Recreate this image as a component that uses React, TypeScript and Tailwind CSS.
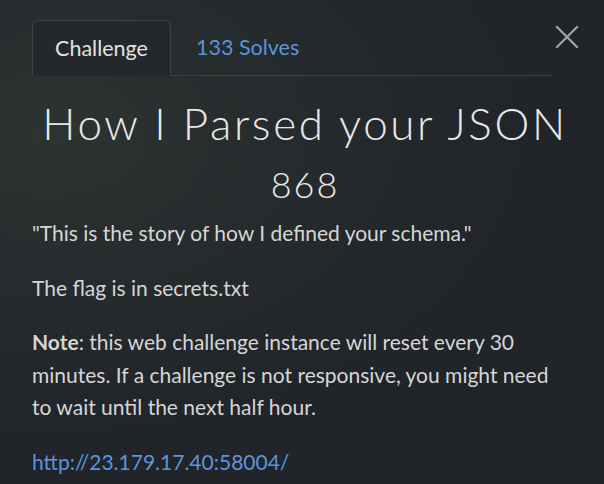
import React from "react";

export default function App() {
  return (
    <div
      className="w-[604px] h-[484px] overflow-hidden bg-[#212429] bg-[radial-gradient(ellipse_at_8%_28%,#2c3431_0%,#262b2d_30%,#212429_65%)] text-[#d9d9d9]"
      style={{ fontFamily: "Lato, 'Noto Sans', sans-serif" }}
    >
      <div className="flex items-start pl-8 pr-[22px] pt-5">
        <div className="flex flex-1 items-end border-b border-[#3c4045]">
          <div className="relative -mb-px flex h-[56px] w-[139px] items-center justify-center rounded-t-[6px] border border-b-0 border-[#3c4045] text-[21.5px] text-[#e2e2e2] bg-[#24282b]">
            Challenge
          </div>
          <div className="flex h-[55px] items-center pl-[25px] text-[21.5px] text-[#5b95dc]">133 Solves</div>
        </div>
        <button className="ml-0 mt-[2px] flex h-[30px] w-[30px] items-center justify-center">
          <svg width="24" height="24" viewBox="0 0 24 24" fill="none" stroke="#a3a4a6" strokeWidth="2.2" strokeLinecap="square">
            <path d="M2 2 L22 22 M22 2 L2 22" />
          </svg>
        </button>
      </div>
      <h1 className="mt-[21px] pl-[6px] text-center text-[44px] font-light leading-[52px] tracking-[2.6px] text-[#e8e8e8]">
        How I Parsed your JSON
      </h1>
      <div className="mt-[13px] pl-[6px] text-center text-[36px] font-light leading-[44px] tracking-[2px] text-[#e8e8e8]">868</div>
      <div className="mt-[11px] px-8 text-[21px] leading-[32.5px] text-[#d6d6d6]">
        <p className="mb-[22px]">"This is the story of how I defined your schema."</p>
        <p className="mb-[22px]">The flag is in secrets.txt</p>
        <p className="mb-[22px]">
          <span className="font-bold">Note</span>: this web challenge instance will reset every 30 minutes. If a
          challenge is not responsive, you might need to wait until the next half hour.
        </p>
        <p>
          <a className="text-[#5b95dc]">http://23.179.17.40:58004/</a>
        </p>
      </div>
    </div>
  );
}
